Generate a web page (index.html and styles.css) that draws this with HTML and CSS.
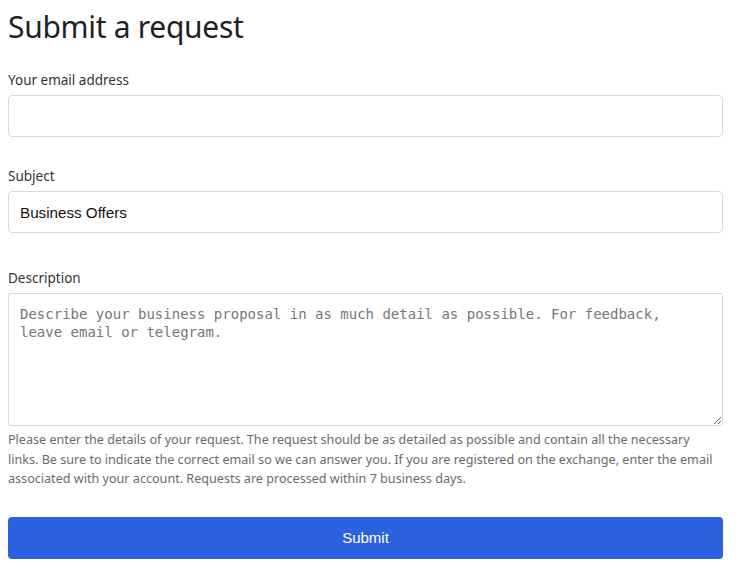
FILE: index.html
```html
<!DOCTYPE html>
<html lang="en">
<head>
<meta charset="utf-8">
<title>Submit a request</title>
<link rel="stylesheet" href="styles.css">
</head>
<body>
<main class="page">
  <h1 class="title">Submit a request</h1>
  <form class="form">
    <div class="field field-email">
      <label class="label" for="email">Your email address</label>
      <input class="input" id="email" type="email">
    </div>
    <div class="field field-subject">
      <label class="label" for="subject">Subject</label>
      <input class="input" id="subject" type="text" value="Business Offers">
    </div>
    <div class="field field-desc">
      <label class="label" for="desc">Description</label>
      <textarea class="textarea" id="desc" placeholder="Describe your business proposal in as much detail as possible. For feedback, leave email or telegram."></textarea>
      <p class="hint">Please enter the details of your request. The request should be as detailed as possible and contain all the necessary links. Be sure to indicate the correct email so we can answer you. If you are registered on the exchange, enter the email associated with your account. Requests are processed within 7 business days.</p>
    </div>
    <button class="submit" type="button">Submit</button>
  </form>
</main>
</body>
</html>
```
FILE: styles.css
```css
html, body {
  background: #ffffff;
}
body {
  margin: 0;
  padding: 8px;
  font-family: "Noto Sans", "Open Sans", sans-serif;
  color: #2b2b2b;
}
.page {
  width: 715px;
}
.title {
  margin: 0;
  font-size: 30px;
  line-height: 38px;
  font-weight: 400;
  color: #222;
  letter-spacing: -0.3px;
}
.form {
  display: flex;
  flex-direction: column;
}
.field {
  display: flex;
  flex-direction: column;
}
.field-email {
  margin-top: 24px;
}
.field-subject {
  margin-top: 29px;
}
.field-desc {
  margin-top: 35px;
}
.label {
  font-size: 13.5px;
  line-height: 20px;
  color: #333;
  margin-bottom: 5px;
}
.input {
  box-sizing: border-box;
  height: 42px;
  width: 100%;
  border: 1px solid #d9d9d9;
  border-radius: 4px;
  padding: 0 11px;
  font-family: "Liberation Sans", Arial, sans-serif;
  font-size: 15.2px;
  color: #111;
  background: #fff;
  outline: none;
}
.textarea {
  box-sizing: border-box;
  height: 133px;
  width: 100%;
  border: 1px solid #d9d9d9;
  border-radius: 2px;
  padding: 11px 11px 10px;
  font-family: "DejaVu Sans Mono", "Liberation Mono", monospace;
  font-size: 14px;
  line-height: 18px;
  color: #111;
  background: #fff;
  outline: none;
  resize: vertical;
  margin: 0;
}
.textarea::placeholder {
  color: #777;
}
.hint {
  margin: 4px 0 0;
  font-size: 12.6px;
  line-height: 19.5px;
  color: #6b6b6b;
}
.submit {
  margin-top: 28px;
  height: 42px;
  width: 100%;
  border: none;
  border-radius: 4px;
  background: #2c62df;
  color: #fff;
  font-family: "Liberation Sans", Arial, sans-serif;
  font-size: 15px;
}
```
